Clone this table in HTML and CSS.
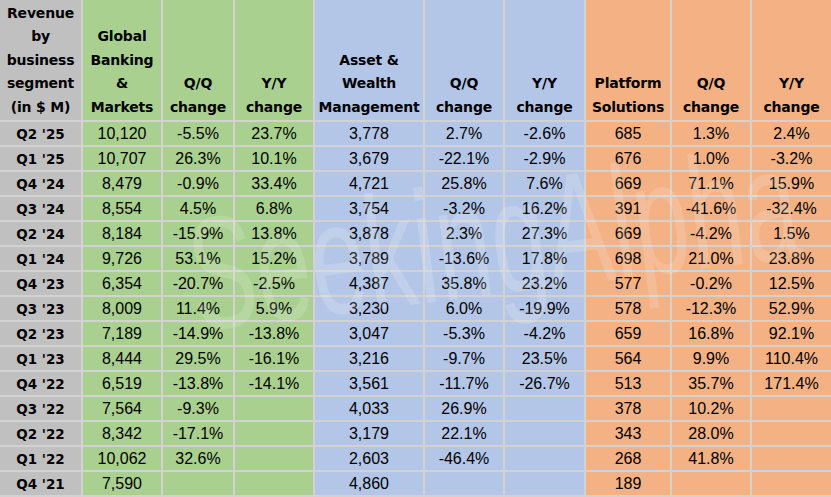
FILE: index.html
```html
<!DOCTYPE html>
<html>
<head>
<meta charset="utf-8">
<link rel="stylesheet" href="styles.css">
</head>
<body>
<div class="wrap">
<div class="grid">
  <div class="h lab">Revenue<br>by<br>business<br>segment<br>(in $ M)</div>
  <div class="h g">Global<br>Banking<br>&amp;<br>Markets</div>
  <div class="h g">Q/Q<br>change</div>
  <div class="h g">Y/Y<br>change</div>
  <div class="h b">Asset &amp;<br>Wealth<br>Management</div>
  <div class="h b">Q/Q<br>change</div>
  <div class="h b">Y/Y<br>change</div>
  <div class="h o">Platform<br>Solutions</div>
  <div class="h o">Q/Q<br>change</div>
  <div class="h o">Y/Y<br>change</div>

  <div class="q">Q2 '25</div><div class="d g">10,120</div><div class="d g">-5.5%</div><div class="d g">23.7%</div><div class="d b">3,778</div><div class="d b">2.7%</div><div class="d b">-2.6%</div><div class="d o">685</div><div class="d o">1.3%</div><div class="d o">2.4%</div>
  <div class="q">Q1 '25</div><div class="d g">10,707</div><div class="d g">26.3%</div><div class="d g">10.1%</div><div class="d b">3,679</div><div class="d b">-22.1%</div><div class="d b">-2.9%</div><div class="d o">676</div><div class="d o">1.0%</div><div class="d o">-3.2%</div>
  <div class="q">Q4 '24</div><div class="d g">8,479</div><div class="d g">-0.9%</div><div class="d g">33.4%</div><div class="d b">4,721</div><div class="d b">25.8%</div><div class="d b">7.6%</div><div class="d o">669</div><div class="d o">71.1%</div><div class="d o">15.9%</div>
  <div class="q">Q3 '24</div><div class="d g">8,554</div><div class="d g">4.5%</div><div class="d g">6.8%</div><div class="d b">3,754</div><div class="d b">-3.2%</div><div class="d b">16.2%</div><div class="d o">391</div><div class="d o">-41.6%</div><div class="d o">-32.4%</div>
  <div class="q">Q2 '24</div><div class="d g">8,184</div><div class="d g">-15.9%</div><div class="d g">13.8%</div><div class="d b">3,878</div><div class="d b">2.3%</div><div class="d b">27.3%</div><div class="d o">669</div><div class="d o">-4.2%</div><div class="d o">1.5%</div>
  <div class="q">Q1 '24</div><div class="d g">9,726</div><div class="d g">53.1%</div><div class="d g">15.2%</div><div class="d b">3,789</div><div class="d b">-13.6%</div><div class="d b">17.8%</div><div class="d o">698</div><div class="d o">21.0%</div><div class="d o">23.8%</div>
  <div class="q">Q4 '23</div><div class="d g">6,354</div><div class="d g">-20.7%</div><div class="d g">-2.5%</div><div class="d b">4,387</div><div class="d b">35.8%</div><div class="d b">23.2%</div><div class="d o">577</div><div class="d o">-0.2%</div><div class="d o">12.5%</div>
  <div class="q">Q3 '23</div><div class="d g">8,009</div><div class="d g">11.4%</div><div class="d g">5.9%</div><div class="d b">3,230</div><div class="d b">6.0%</div><div class="d b">-19.9%</div><div class="d o">578</div><div class="d o">-12.3%</div><div class="d o">52.9%</div>
  <div class="q">Q2 '23</div><div class="d g">7,189</div><div class="d g">-14.9%</div><div class="d g">-13.8%</div><div class="d b">3,047</div><div class="d b">-5.3%</div><div class="d b">-4.2%</div><div class="d o">659</div><div class="d o">16.8%</div><div class="d o">92.1%</div>
  <div class="q">Q1 '23</div><div class="d g">8,444</div><div class="d g">29.5%</div><div class="d g">-16.1%</div><div class="d b">3,216</div><div class="d b">-9.7%</div><div class="d b">23.5%</div><div class="d o">564</div><div class="d o">9.9%</div><div class="d o">110.4%</div>
  <div class="q">Q4 '22</div><div class="d g">6,519</div><div class="d g">-13.8%</div><div class="d g">-14.1%</div><div class="d b">3,561</div><div class="d b">-11.7%</div><div class="d b">-26.7%</div><div class="d o">513</div><div class="d o">35.7%</div><div class="d o">171.4%</div>
  <div class="q">Q3 '22</div><div class="d g">7,564</div><div class="d g">-9.3%</div><div class="d g"></div><div class="d b">4,033</div><div class="d b">26.9%</div><div class="d b"></div><div class="d o">378</div><div class="d o">10.2%</div><div class="d o"></div>
  <div class="q">Q2 '22</div><div class="d g">8,342</div><div class="d g">-17.1%</div><div class="d g"></div><div class="d b">3,179</div><div class="d b">22.1%</div><div class="d b"></div><div class="d o">343</div><div class="d o">28.0%</div><div class="d o"></div>
  <div class="q">Q1 '22</div><div class="d g">10,062</div><div class="d g">32.6%</div><div class="d g"></div><div class="d b">2,603</div><div class="d b">-46.4%</div><div class="d b"></div><div class="d o">268</div><div class="d o">41.8%</div><div class="d o"></div>
  <div class="q">Q4 '21</div><div class="d g">7,590</div><div class="d g"></div><div class="d g"></div><div class="d b">4,860</div><div class="d b"></div><div class="d b"></div><div class="d o">189</div><div class="d o"></div><div class="d o"></div>
</div>
<div class="mark">SeekingAlpha</div>
</div>
</body>
</html>
```

FILE: styles.css
```css
html, body {
  margin: 0;
  padding: 0;
  background: #d2d2d2;
}
.wrap {
  position: relative;
  width: 831px;
  height: 497px;
  overflow: hidden;
}
.grid {
  display: grid;
  grid-template-columns: 81px 78px 70px 78px 108px 78px 79px 84px 78px 79px;
  grid-template-rows: 120px repeat(15, 23px);
  gap: 2px;
  padding-bottom: 2px;
  background: #d2d2d2;
}
.g { background: #a9d08e; }
.b { background: #b4c6e7; }
.o { background: #f4b183; }
.lab, .q { background: #c0c0c0; }
.h {
  display: flex;
  align-items: flex-end;
  justify-content: center;
  text-align: center;
  font-family: "DejaVu Sans", sans-serif;
  font-weight: bold;
  font-size: 14px;
  line-height: 23.5px;
  color: #000;
  padding-bottom: 1px;
  letter-spacing: -0.2px;
}
.q {
  display: flex;
  align-items: center;
  justify-content: center;
  font-family: "DejaVu Sans", sans-serif;
  font-weight: bold;
  font-size: 13.5px;
  color: #000;
}
.d {
  display: flex;
  align-items: center;
  justify-content: center;
  font-family: "Liberation Sans", Arial, sans-serif;
  font-size: 16px;
  color: #000;
}
.mark {
  position: absolute;
  left: 55px;
  top: 170px;
  width: 700px;
  text-align: center;
  font-family: "Liberation Sans", Arial, sans-serif;
  font-size: 160px;
  line-height: 160px;
  color: #fff;
  opacity: 0.16;
  white-space: nowrap;
  transform: rotate(-7deg) scaleX(0.62);
  transform-origin: center;
  pointer-events: none;
}
```
